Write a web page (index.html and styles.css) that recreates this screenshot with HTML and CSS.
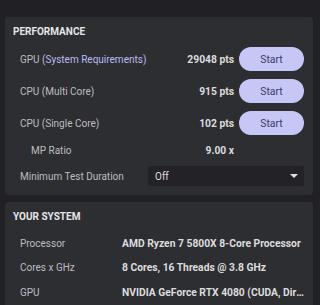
FILE: index.html
```html
<!DOCTYPE html>
<html>
<head>
<meta charset="utf-8">
<link rel="stylesheet" href="styles.css">
</head>
<body>
<div class="page">
  <section class="card perf">
    <h2 class="card-title">PERFORMANCE</h2>
    <div class="row bench">
      <span class="label">GPU <span class="link">(System Requirements)</span></span>
      <span class="value">29048 pts</span>
      <button class="start">Start</button>
    </div>
    <div class="row bench">
      <span class="label">CPU (Multi Core)</span>
      <span class="value">915 pts</span>
      <button class="start">Start</button>
    </div>
    <div class="row bench">
      <span class="label">CPU (Single Core)</span>
      <span class="value">102 pts</span>
      <button class="start">Start</button>
    </div>
    <div class="row ratio">
      <span class="label indent">MP Ratio</span>
      <span class="value">9.00 x</span>
      <span class="spacer"></span>
    </div>
    <div class="row duration">
      <span class="label">Minimum Test Duration</span>
      <div class="select"><span>Off</span><span class="caret"></span></div>
    </div>
  </section>
  <section class="card sys">
    <h2 class="card-title">YOUR SYSTEM</h2>
    <div class="info">
      <span class="label">Processor</span>
      <span class="info-val">AMD Ryzen 7 5800X 8-Core Processor</span>
    </div>
    <div class="info">
      <span class="label">Cores x GHz</span>
      <span class="info-val">8 Cores, 16 Threads @ 3.8 GHz</span>
    </div>
    <div class="info">
      <span class="label">GPU</span>
      <span class="info-val">NVIDIA GeForce RTX 4080 (CUDA, DirectX 12)</span>
    </div>
  </section>
</div>
</body>
</html>
```
FILE: styles.css
```css
* { box-sizing: border-box; }
html, body { margin: 0; padding: 0; }
body {
  background: #212125;
  font-family: Roboto, "Open Sans", sans-serif;
  font-size: 10px;
  color: #bdbdc0;
  width: 320px;
  height: 305px;
  overflow: hidden;
}
.page {
  padding: 17px 7px 0 5px;
  display: flex;
  flex-direction: column;
  gap: 7px;
}
.card {
  background: #2d2e32;
  border-radius: 4px;
  padding: 7px 9px 9px 8px;
}
.card-title {
  margin: 0;
  font-size: 10px;
  font-weight: 700;
  color: #e6e6e8;
  line-height: 16px;
}
.row {
  display: flex;
  align-items: center;
  padding-left: 7px;
}
.label { flex: 1; white-space: nowrap; }
.link { color: #bcbcf4; }
.indent { padding-left: 11px; }
.value {
  font-weight: 700;
  font-size: 10.3px;
  color: #dcdcde;
  margin-right: 5px;
}
.bench { height: 24px; margin-top: 8px; }
.bench:first-of-type { margin-top: 7px; }
.start {
  width: 65px;
  height: 24px;
  border: none;
  border-radius: 12px;
  background: #c7c7f7;
  color: #3b3b5e;
  font-family: inherit;
  font-size: 10.5px;
  padding: 0;
}
.spacer { width: 65px; }
.ratio { height: 18px; margin-top: 6px; }
.duration { height: 20px; margin-top: 7px; }
.select {
  width: 156px;
  height: 20px;
  background: #232327;
  border-radius: 2px;
  display: flex;
  align-items: center;
  justify-content: space-between;
  padding: 0 6px 0 7px;
  color: #dedee0;
}
.caret {
  width: 0; height: 0;
  border-left: 4px solid transparent;
  border-right: 4px solid transparent;
  border-top: 4px solid #e0e0e0;
}
.sys { padding-bottom: 20px; }
.info {
  display: flex;
  align-items: center;
  height: 24.5px;
  padding-left: 7px;
}
.info:first-of-type { margin-top: 6px; }
.info .label { flex: 0 0 102px; }
.info-val {
  flex: 1;
  min-width: 0;
  font-weight: 700;
  font-size: 10.3px;
  color: #dcdcde;
  white-space: nowrap;
  overflow: hidden;
  text-overflow: ellipsis;
}
```
